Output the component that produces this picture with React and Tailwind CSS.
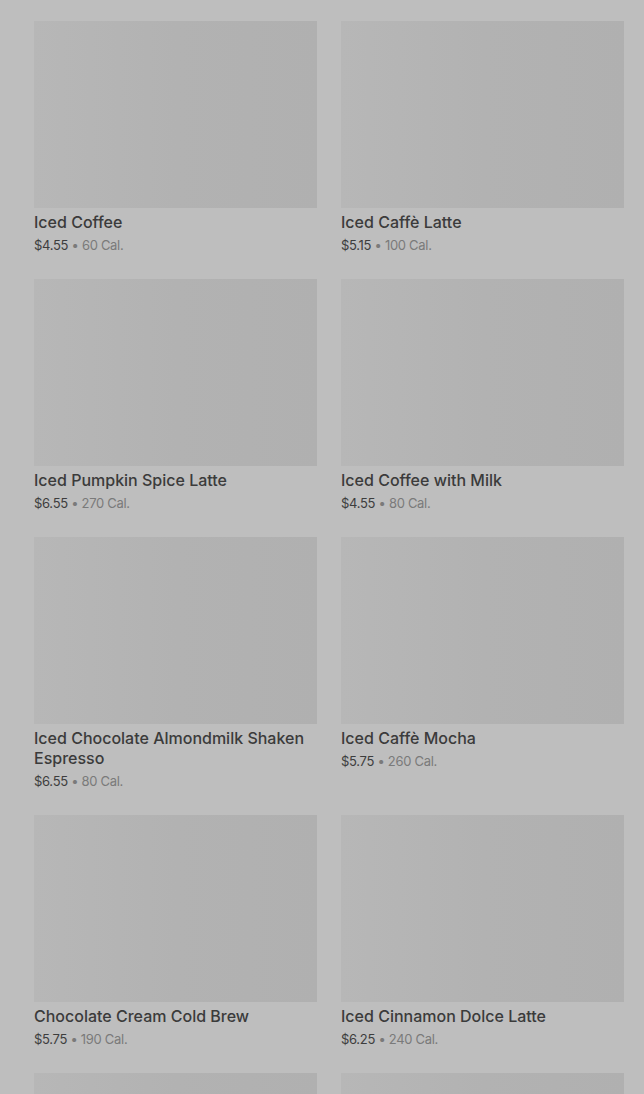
import React from 'react';

const items = [
  { name: 'Iced Coffee', price: '$4.55', cal: '60 Cal.' },
  { name: 'Iced Caffè Latte', price: '$5.15', cal: '100 Cal.' },
  { name: 'Iced Pumpkin Spice Latte', price: '$6.55', cal: '270 Cal.' },
  { name: 'Iced Coffee with Milk', price: '$4.55', cal: '80 Cal.' },
  { name: 'Iced Chocolate Almondmilk Shaken Espresso', price: '$6.55', cal: '80 Cal.' },
  { name: 'Iced Caffè Mocha', price: '$5.75', cal: '260 Cal.' },
  { name: 'Chocolate Cream Cold Brew', price: '$5.75', cal: '190 Cal.' },
  { name: 'Iced Cinnamon Dolce Latte', price: '$6.25', cal: '240 Cal.' },
  // next row is still loading below the fold
  { loading: true },
  { loading: true },
];

const Card = ({ item }) => (
  <div className="flex flex-col">
    <div className="h-[187px] w-full bg-gradient-to-r from-[#b7b7b7] via-[#b2b2b2] to-[#b0b0b0]" />
    {!item.loading && (
      <>
        <p className="mt-[4px] text-base leading-5 font-medium text-[#3b3b3b]">{item.name}</p>
        <p className="mt-[4px] text-[13px] leading-[18px] tracking-[-0.3px]">
          <span className="text-[#3d3d3d]">{item.price}</span>
          <span className="text-[#7a7a7a]"> • {item.cal}</span>
        </p>
      </>
    )}
  </div>
);

export default function App() {
  return (
    <div className="min-h-screen bg-[#bebebe] font-['Inter',sans-serif]">
      <div className="grid grid-cols-2 gap-x-[24px] gap-y-[25px] pl-[34px] pr-[20px] pt-[21px] pb-10">
        {items.map((item, i) => (
          <Card key={i} item={item} />
        ))}
      </div>
    </div>
  );
}
